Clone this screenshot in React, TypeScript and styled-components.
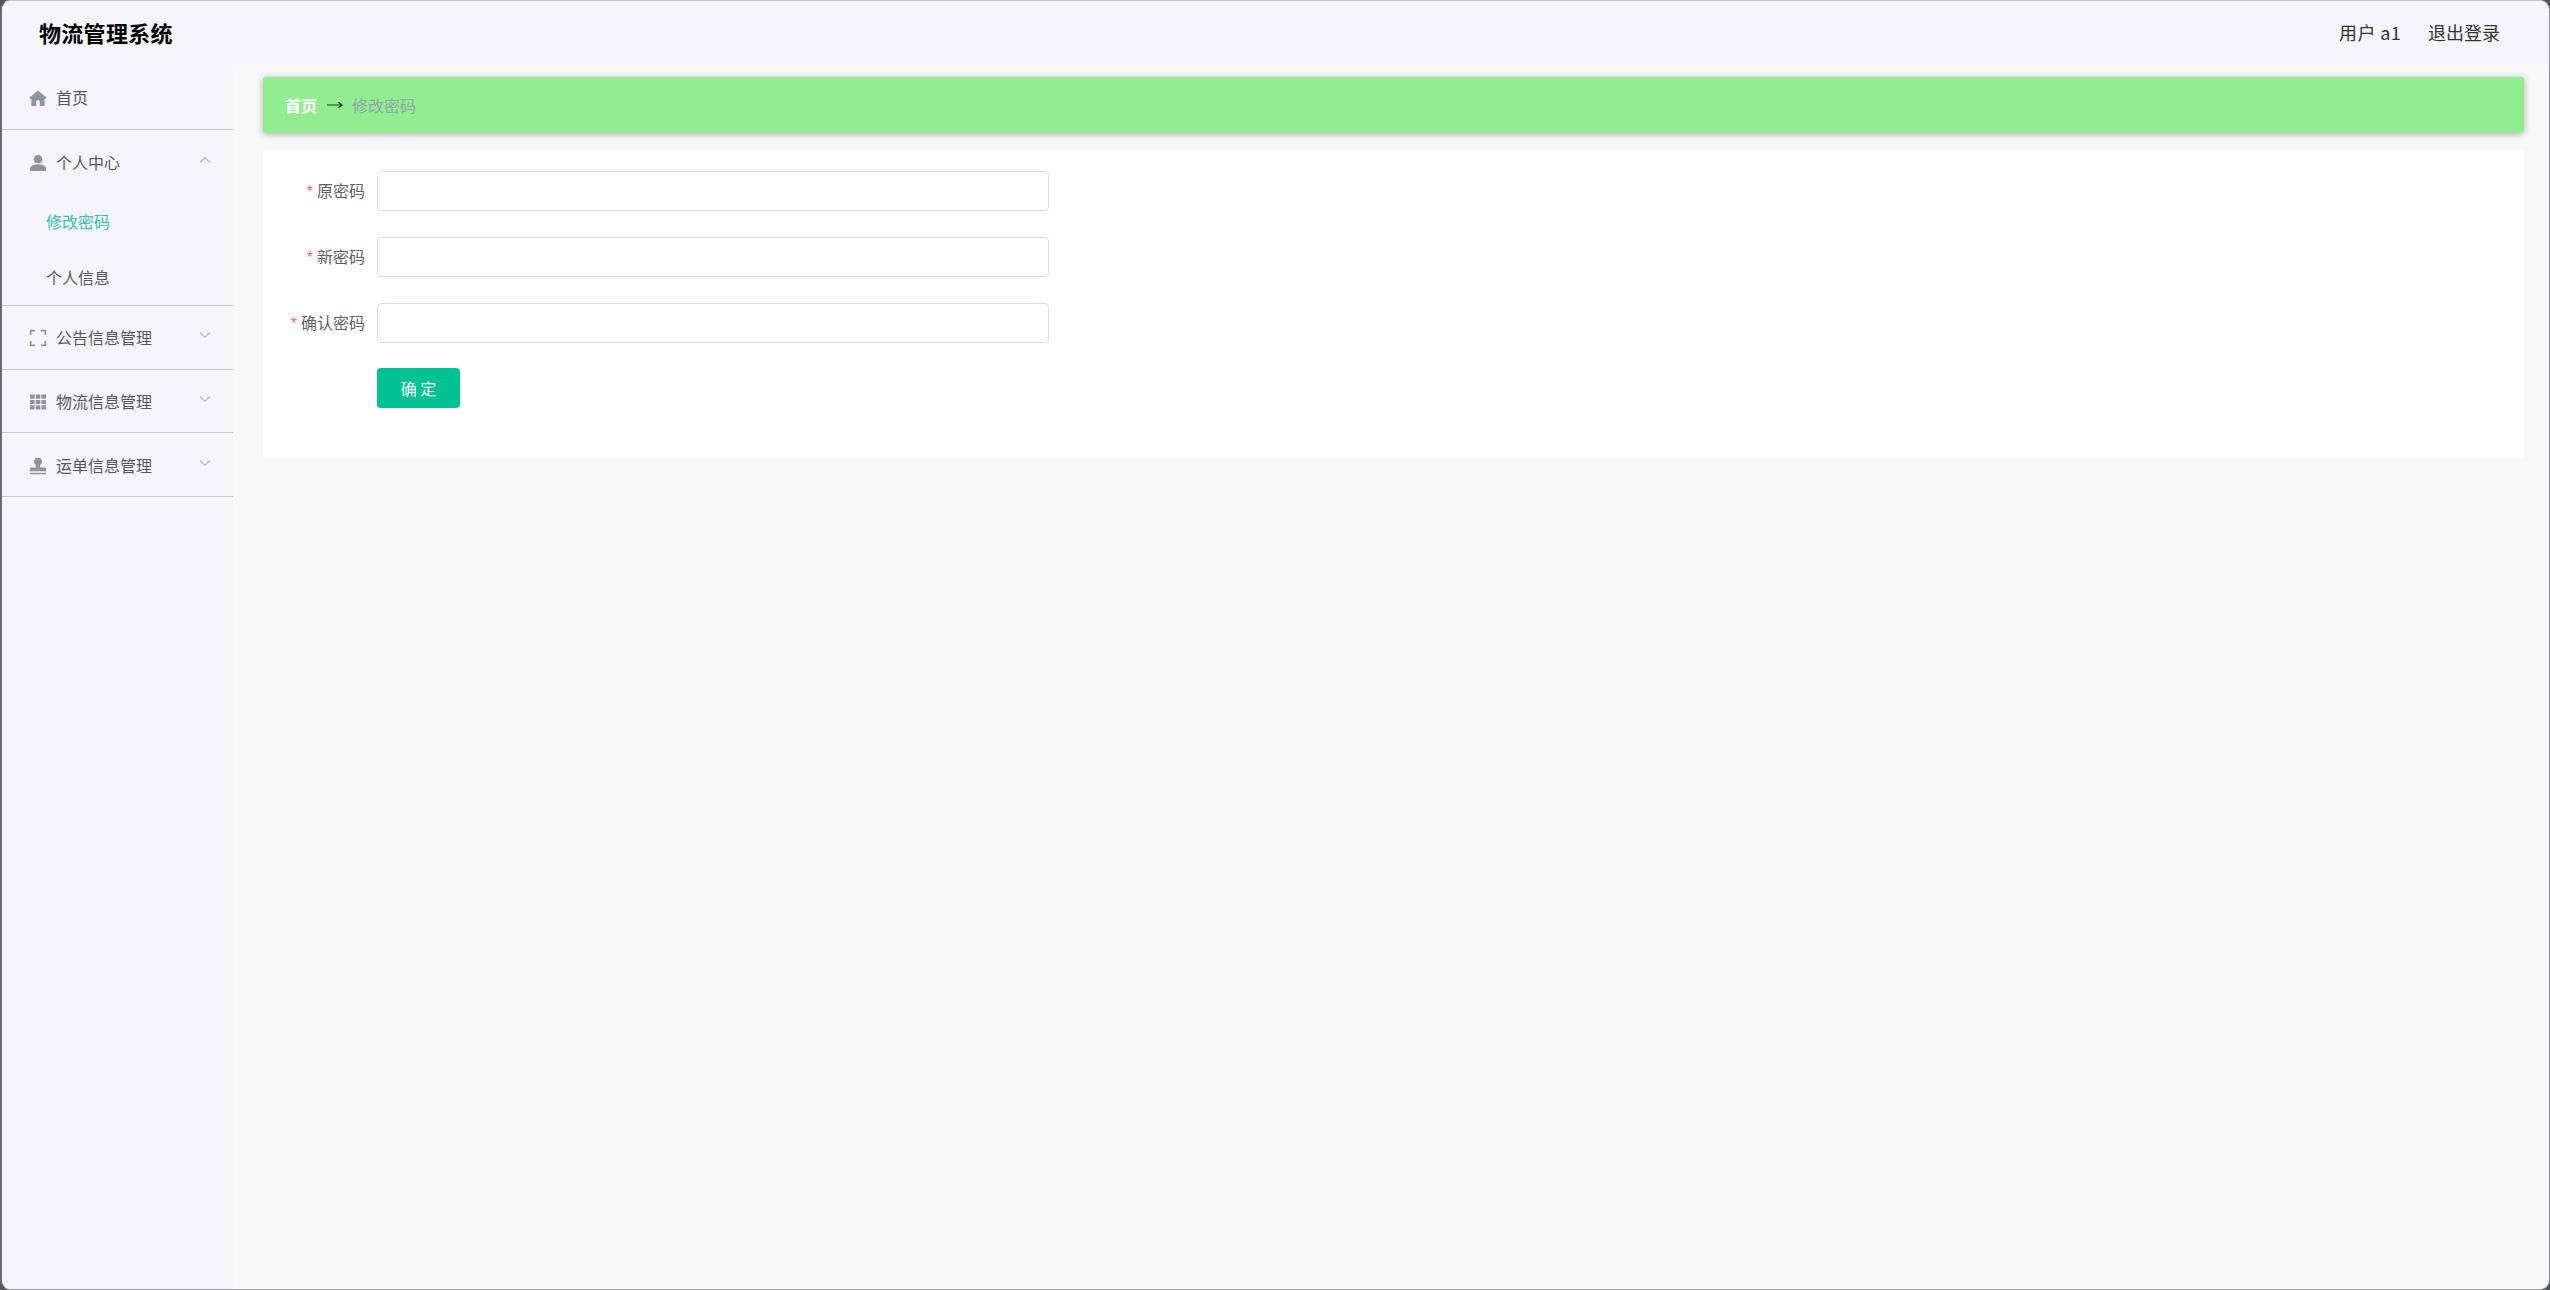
import React from "react";
import styled, { createGlobalStyle } from "styled-components";

const Global = createGlobalStyle`
  html, body { margin: 0; padding: 0; height: 100%; background: #55555c; overflow: hidden; }
  #root { height: 100%; }
  * { box-sizing: border-box; }
  body { font-family: "Noto Sans CJK SC", "Liberation Sans", sans-serif; }
`;

const Frame = styled.div`
  height: 1290px;
  display: flex;
  flex-direction: column;
  background: #f5f5fb;
  border-style: solid;
  border-color: #c4c4ca #8e8e94 #a0a0a6 #6a6a70;
  border-width: 1px 1px 1px 2px;
  border-radius: 10px;
  overflow: hidden;
`;

const Header = styled.header`
  height: 64px;
  flex: none;
  display: flex;
  align-items: center;
  justify-content: space-between;
  padding: 0 49px 0 37px;
  background: #f5f5fb;
`;

const Title = styled.div`
  font-size: 22px;
  font-weight: 700;
  letter-spacing: 0.3px;
  color: #000;
  line-height: 1;
  position: relative;
  top: -1px;
`;

const HeaderRight = styled.div`
  display: flex;
  gap: 27px;
  font-size: 18px;
  color: #333;
  line-height: 1;
  position: relative;
  top: -1px;
`;

const UserName = styled.span`
  letter-spacing: 0.35px;
`;

const Body = styled.div`
  flex: 1;
  display: flex;
  min-height: 0;
`;

const Sidebar = styled.nav`
  width: 231px;
  flex: none;
  background: #f5f5fb;
`;

const MenuRow = styled.div<{ $height?: number }>`
  height: ${(p) => p.$height ?? 65}px;
  display: flex;
  align-items: center;
  padding-left: 27px;
  font-size: 16px;
  color: #55585e;
  border-bottom: 1px solid #c9c9ce;
  position: relative;
`;

const SubGroup = styled.div`
  border-bottom: 1px solid #c9c9ce;
`;

const GroupRow = styled(MenuRow)`
  border-bottom: none;
`;

const SubRow = styled.div<{ $active?: boolean }>`
  height: 56px;
  display: flex;
  align-items: center;
  padding-left: 44px;
  font-size: 16px;
  color: ${(p) => (p.$active ? "#35c2b0" : "#55585e")};
`;

const IconSlot = styled.span`
  width: 18px;
  height: 18px;
  margin-right: 9px;
  display: inline-flex;
  color: #8f939b;
  position: relative;
  top: 1px;
`;

const Chevron = styled.svg`
  position: absolute;
  left: 196px;
  top: 50%;
  margin-top: -9px;
  width: 14px;
  height: 14px;
  color: #b4b7bd;
`;

const Main = styled.main`
  flex: 1;
  min-width: 0;
  padding: 12px 25px 0 30px;
  background: #f8f8f9;
`;

const Breadcrumb = styled.div`
  height: 56px;
  display: flex;
  align-items: center;
  padding-left: 22px;
  background: #90ee90;
  border-radius: 3px;
  box-shadow: 0 1px 6px rgba(70, 40, 40, 0.38);
  font-size: 16px;
`;

const CrumbHome = styled.span`
  color: #fff;
  font-weight: 700;
`;

const CrumbArrow = styled.svg`
  width: 16px;
  height: 10px;
  margin: 0 9px 0 10px;
  color: #1f3a1f;
`;

const CrumbCurrent = styled.span`
  color: #92a6ab;
`;

const Card = styled.section`
  margin-top: 17px;
  height: 308px;
  padding: 21px 0 0;
  background: #fff;
  border-radius: 3px;
`;

const FormRow = styled.div`
  height: 40px;
  margin-bottom: 26px;
  display: flex;
  align-items: center;
`;

const Label = styled.label`
  width: 114px;
  padding-right: 12px;
  text-align: right;
  font-size: 16px;
  line-height: 1;
  color: #606266;
`;

const Star = styled.span`
  color: #f56c6c;
  margin-right: 4px;
  font-family: "Liberation Sans", sans-serif;
`;

const Input = styled.input`
  width: 672px;
  height: 40px;
  padding: 0 15px;
  border: 1px solid #dcdfe6;
  border-radius: 4px;
  background: #fff;
  outline: none;
`;

const Submit = styled.button`
  display: block;
  margin: -1px 0 0 114px;
  width: 83px;
  height: 40px;
  border: none;
  border-radius: 4px;
  background: #00c292;
  color: #fff;
  font-family: inherit;
  font-size: 16px;
`;

const Home = () => (
  <svg viewBox="0 0 18 18" width="18" height="18" fill="currentColor">
    <path d="M9 1.5 .6 8.6 1.6 10.2 2.4 9.6V17h4.8v-4.2a1.8 1.8 0 0 1 3.6 0V17h4.8V9.6l.8.6 1-1.6z" />
  </svg>
);
const Person = () => (
  <svg viewBox="0 0 18 18" width="18" height="18" fill="currentColor">
    <circle cx="9" cy="5.2" r="4.3" />
    <path d="M1 17v-2.2C1 12 4 10.6 9 10.6s8 1.4 8 4.2V17z" />
  </svg>
);
const FullScreen = () => (
  <svg viewBox="0 0 18 18" width="18" height="18" fill="none" stroke="currentColor" strokeWidth="1.7">
    <path d="M6 1.6H1.6V6M12 1.6h4.4V6M1.6 12v4.4H6M16.4 12v4.4H12" />
  </svg>
);
const Grid = () => (
  <svg viewBox="0 0 18 18" width="18" height="18" fill="currentColor">
    <path d="M1 1.5h4.6v4.2H1zM6.7 1.5h4.6v4.2H6.7zM12.4 1.5H17v4.2h-4.6zM1 6.9h4.6v4.2H1zM6.7 6.9h4.6v4.2H6.7zM12.4 6.9H17v4.2h-4.6zM1 12.3h4.6v4.2H1zM6.7 12.3h4.6v4.2H6.7zM12.4 12.3H17v4.2h-4.6z" />
  </svg>
);
const Stamp = () => (
  <svg viewBox="0 0 18 18" width="18" height="18" fill="currentColor">
    <path d="M9 .5a4 4 0 0 0-2.4 7.2c.4.4.4 1.9 0 2.9H2.3c-.8 0-1.3.7-1.3 1.4v2.2h16V12c0-.7-.5-1.4-1.3-1.4h-4.3c-.4-1-.4-2.5 0-2.9A4 4 0 0 0 9 .5z" />
    <path d="M1 15.8h16v1.5H1z" />
  </svg>
);

const Caret = ({ up }: { up?: boolean }) => (
  <Chevron viewBox="0 0 14 14" fill="none" stroke="currentColor" strokeWidth="1.1">
    <path d={up ? "M2 9.5 7 4.5 12 9.5" : "M2 4.5 7 9.5 12 4.5"} />
  </Chevron>
);

const groups = [
  { label: "公告信息管理", icon: <FullScreen /> },
  { label: "物流信息管理", icon: <Grid /> },
  { label: "运单信息管理", icon: <Stamp /> },
];

const fields = ["原密码", "新密码", "确认密码"];

export default function App() {
  return (
    <>
      <Global />
      <Frame>
        <Header>
          <Title>物流管理系统</Title>
          <HeaderRight>
            <UserName>用户 a1</UserName>
            <span>退出登录</span>
          </HeaderRight>
        </Header>
        <Body>
          <Sidebar>
            <MenuRow>
              <IconSlot><Home /></IconSlot>
              首页
            </MenuRow>
            <SubGroup>
              <GroupRow $height={63}>
                <IconSlot><Person /></IconSlot>
                个人中心
                <Caret up />
              </GroupRow>
              <SubRow $active>修改密码</SubRow>
              <SubRow>个人信息</SubRow>
            </SubGroup>
            {groups.map((g) => (
              <MenuRow key={g.label} $height={63.7}>
                <IconSlot>{g.icon}</IconSlot>
                {g.label}
                <Caret />
              </MenuRow>
            ))}
          </Sidebar>
          <Main>
            <Breadcrumb>
              <CrumbHome>首页</CrumbHome>
              <CrumbArrow viewBox="0 0 16 10" fill="none" stroke="currentColor" strokeWidth="1.2">
                <path d="M0 5h15M11.5 2.2 15 5l-3.5 2.8" />
              </CrumbArrow>
              <CrumbCurrent>修改密码</CrumbCurrent>
            </Breadcrumb>
            <Card>
              {fields.map((f) => (
                <FormRow key={f}>
                  <Label>
                    <Star>*</Star>
                    {f}
                  </Label>
                  <Input type="password" />
                </FormRow>
              ))}
              <Submit>确 定</Submit>
            </Card>
          </Main>
        </Body>
      </Frame>
    </>
  );
}
